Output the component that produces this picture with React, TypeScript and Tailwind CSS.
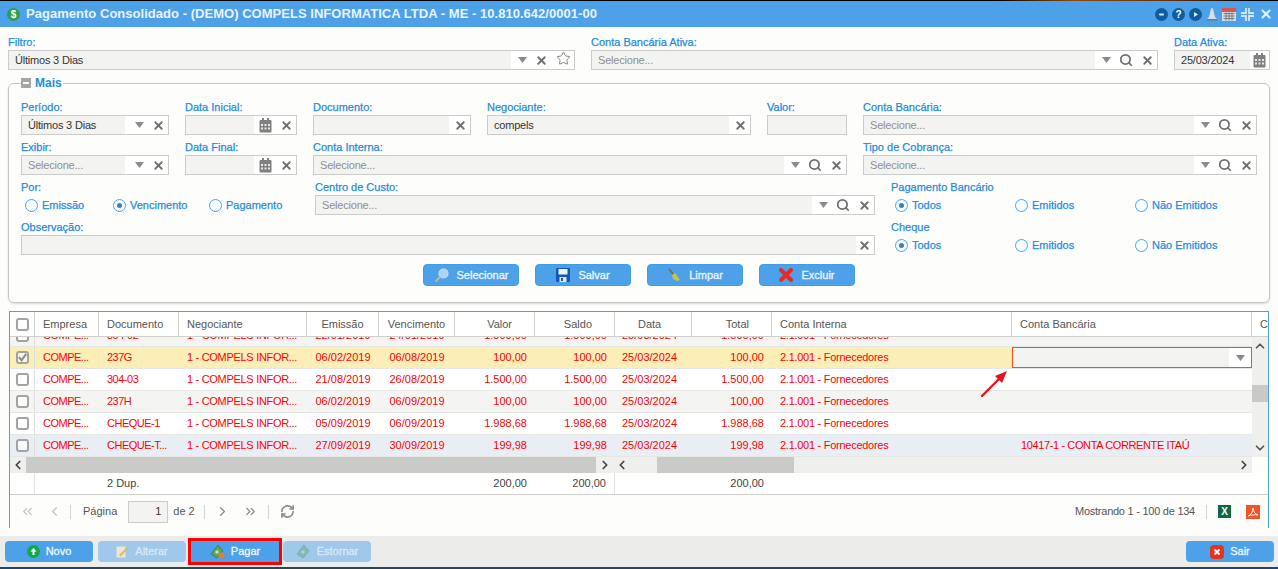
import { Search, Star, X, ChevronLeft, ChevronRight, ChevronUp, ChevronDown, ChevronsLeft, ChevronsRight, RefreshCw } from "lucide-react";
import type { ReactNode } from "react";

const Caret = () => (
  <svg width="9" height="6" viewBox="0 0 9 6" className="shrink-0">
    <path d="M0 0h9L4.500 6z" fill="#8a8a8a" />
  </svg>
);

const Clear = () => <X size={13} strokeWidth={3.4} className="shrink-0 text-[#6f6f6f]" />;
const Lens = () => <Search size={14} strokeWidth={3} className="shrink-0 text-[#6f6f6f]" />;

const Calendar = () => (
  <svg width="13" height="15" viewBox="0 0 13 15" className="shrink-0">
    <rect x="0.5" y="2" width="12" height="12.500" rx="1" fill="#808080" />
    <rect x="3" y="0" width="2" height="4" fill="#808080" />
    <rect x="8" y="0" width="2" height="4" fill="#808080" />
    <path d="M2 6h2v2H2zM5.500 6h2v2h-2zM9 6h2v2H9zM2 9.500h2v2H2zM5.500 9.500h2v2h-2zM9 9.500h2v2H9z" fill="#e8e8e8" />
  </svg>
);

type InputProps = {
  value?: string;
  placeholder?: string;
  icons?: ReactNode;
  iconsWidth?: string;
};

const Input = ({ value, placeholder, icons, iconsWidth }: InputProps) => (
  <div className="flex h-5 w-full border border-[#cbcbc7] bg-white">
    <div className="flex min-w-0 flex-1 items-center overflow-hidden bg-[#f3f4f2] px-[6px] text-[11px] tracking-[-0.2px] whitespace-nowrap text-[#333]">
      {value}
      {placeholder && <span className="text-[#8f8f8f]">{placeholder}</span>}
    </div>
    {icons && (
      <div className={`flex shrink-0 items-center justify-end gap-2 pr-[3px] ${iconsWidth}`}>{icons}</div>
    )}
  </div>
);

const Field = ({ label, className, children }: { label: string; className: string; children: ReactNode }) => (
  <div className={`flex h-10 shrink-0 flex-col ${className}`}>
    <label className="flex h-5 items-center pt-[5px] text-[11px] text-[#1f8be0] [-webkit-text-stroke:0.25px]">{label}</label>
    {children}
  </div>
);

const Radio = ({ label, checked, className }: { label: string; checked?: boolean; className?: string }) => (
  <div className={`flex items-center gap-[4px] text-[11px] text-[#1f8be0] [-webkit-text-stroke:0.25px] ${className ?? ""}`}>
    <span className="flex h-[13px] w-[13px] shrink-0 items-center justify-center rounded-full border border-[#4da1e9] bg-[#fafcfe]">
      {checked && <span className="h-[5px] w-[5px] rounded-full bg-[#3f7fb8]" />}
    </span>
    {label}
  </div>
);

const SelectIcons = (
  <>
    <Caret />
    <Lens />
    <Clear />
  </>
);

const CaretClear = (
  <>
    <Caret />
    <Clear />
  </>
);

const CalClear = (
  <>
    <Calendar />
    <Clear />
  </>
);

const ActionButton = ({ icon, label }: { icon: ReactNode; label: string }) => (
  <button className="flex h-[22px] w-24 items-center justify-center gap-2 rounded-sm border border-[#459ae2] bg-[#4da1e9] text-[11px] text-[#eef6fd] [-webkit-text-stroke:0.3px]">
    {icon}
    {label}
  </button>
);

const FooterButton = ({
  icon,
  label,
  disabled,
  className,
}: {
  icon: ReactNode;
  label: string;
  disabled?: boolean;
  className?: string;
}) => (
  <button
    className={`flex h-[21px] w-[88px] items-center justify-center gap-[6px] text-[11px] [-webkit-text-stroke:0.3px] ${
      disabled ? "bg-[#9fc8ea] text-[#d9e9f6]" : "bg-[#4da1e9] text-[#eef6fd]"
    } ${className ?? "rounded-sm"}`}
  >
    {icon}
    {label}
  </button>
);

const Money = ({ faded }: { faded?: boolean }) => (
  <svg width="15" height="15" viewBox="0 0 15 15" className={faded ? "opacity-40" : ""}>
    <path d="M1 10 8 1l5 6-6 7z" fill="#5aa55a" stroke="#2f7a3a" strokeWidth="0.700" />
    <circle cx="7" cy="8" r="1.800" fill="#bfe3b5" />
    {!faded && <circle cx="11.500" cy="11.500" r="3" fill="#ee7a2a" />}
  </svg>
);

const columns =
  "grid grid-cols-[25px_64px_80px_128px_72px_76px_80px_80px_77px_80px_240px_240px_120px]";

type Row = {
  doc: string;
  emissao: string;
  venc: string;
  valor: string;
  conta?: string;
  bg: string;
  checked?: boolean;
  editing?: boolean;
};

const rows: Row[] = [
  { doc: "304-02", emissao: "22/01/2019", venc: "24/01/2019", valor: "1.500,00", bg: "bg-[#f4f5f3]" },
  { doc: "237G", emissao: "06/02/2019", venc: "06/08/2019", valor: "100,00", bg: "bg-[#fbeeb7]", checked: true, editing: true },
  { doc: "304-03", emissao: "21/08/2019", venc: "26/08/2019", valor: "1.500,00", bg: "bg-white" },
  { doc: "237H", emissao: "06/02/2019", venc: "06/09/2019", valor: "100,00", bg: "bg-[#f4f5f3]" },
  { doc: "CHEQUE-1", emissao: "05/09/2019", venc: "06/09/2019", valor: "1.988,68", bg: "bg-white" },
  {
    doc: "CHEQUE-T...",
    emissao: "27/09/2019",
    venc: "30/09/2019",
    valor: "199,98",
    conta: "10417-1 - CONTA CORRENTE ITAÚ",
    bg: "bg-[#e9eef4]",
  },
];

const Check = ({ checked }: { checked?: boolean }) => (
  <span className="flex h-[13px] w-[13px] items-center justify-center rounded-[3px] border-2 border-[#a3a3a3] bg-white/60">
    {checked && (
      <svg width="11" height="11" viewBox="0 0 12 12" className="shrink-0">
        <path d="M2 5.500 5 9l5-7" fill="none" stroke="#8a8a8a" strokeWidth="2.200" />
      </svg>
    )}
  </span>
);

const headerCell = "flex items-center border-r border-[#d0d0cc] text-[11px] text-[#555] whitespace-nowrap";

const TableHeader = () => (
  <div className={`${columns} h-[25px] shrink-0 border-b border-[#cfcfcb] bg-white`}>
    <div className={`${headerCell} justify-center`}>
      <Check />
    </div>
    <div className={`${headerCell} pl-2`}>Empresa</div>
    <div className={`${headerCell} pl-2`}>Documento</div>
    <div className={`${headerCell} pl-2`}>Negociante</div>
    <div className={`${headerCell} justify-center`}>Emissão</div>
    <div className={`${headerCell} justify-center`}>Vencimento</div>
    <div className={`${headerCell} justify-end pr-[22px]`}>Valor</div>
    <div className={`${headerCell} justify-end pr-[22px]`}>Saldo</div>
    <div className={`${headerCell} pl-[23px]`}>Data</div>
    <div className={`${headerCell} justify-end pr-[22px]`}>Total</div>
    <div className={`${headerCell} pl-2`}>Conta Interna</div>
    <div className={`${headerCell} pl-2`}>Conta Bancária</div>
    <div className={`${headerCell} pl-2`}>Centro</div>
  </div>
);

const TableRow = ({ row }: { row: Row }) => (
  <div className={`${columns} h-[22px] shrink-0 border-b border-[#e6e6e2] text-[11px] text-[#f00] ${row.bg}`}>
    <div className="flex items-center justify-center border-r border-[#dededa]">
      <Check checked={row.checked} />
    </div>
    <div className="flex items-center pl-2 tracking-[-0.5px]">COMPE...</div>
    <div className="flex items-center pl-2 tracking-[-0.5px] whitespace-nowrap">{row.doc}</div>
    <div className="flex items-center pl-2 tracking-[-0.3px] whitespace-nowrap">1 - COMPELS INFOR...</div>
    <div className="flex items-center justify-center">{row.emissao}</div>
    <div className="flex items-center justify-center">{row.venc}</div>
    <div className="flex items-center justify-end pr-2">{row.valor}</div>
    <div className="flex items-center justify-end pr-2">{row.valor}</div>
    <div className="flex items-center pl-[7px]">25/03/2024</div>
    <div className="flex items-center justify-end pr-2">{row.valor}</div>
    <div className="flex items-center pl-2 tracking-[-0.27px] whitespace-nowrap">2.1.001 - Fornecedores</div>
    <div className="flex items-center tracking-[-0.38px] whitespace-nowrap">
      {row.editing ? (
        <div className="flex h-[21px] w-full items-center border border-[#ff4d1a] bg-white">
          <div className="h-full flex-1 bg-[#f3f4f2]" />
          <div className="flex w-[22px] justify-center">
            <Caret />
          </div>
        </div>
      ) : (
        <span className="pl-[9px]">{row.conta}</span>
      )}
    </div>
  </div>
);

const PagerSep = () => <span className="block h-[14px] w-px bg-[#d5d5d1]" />;

export default function App() {
  return (
    <div className="flex h-[569px] w-[1278px] flex-col overflow-hidden bg-[#fdfefc] font-['Liberation_Sans',Arial,sans-serif]">
      <div className="h-px shrink-0 bg-[linear-gradient(90deg,#000_78%,#8a4a14_84%,#5a3010_92%,#000_98%)]" />

      {/* barra de titulo */}
      <div className="flex h-[26px] shrink-0 items-center bg-[#4da1e9] pr-[5px] pl-[7px]">
        <span className="flex h-[13px] w-[13px] items-center justify-center rounded-full bg-[#2e9e4a] text-[10px] font-bold text-white">
          $
        </span>
        <h1 className="ml-[6px] text-[13px] font-bold tracking-[0.03px] text-[#e9f3fc]">
          Pagamento Consolidado - (DEMO) COMPELS INFORMATICA LTDA - ME - 10.810.642/0001-00
        </h1>
        <div className="ml-auto flex items-center gap-1">
          <svg width="13" height="13" viewBox="0 0 13 13">
            <circle cx="6.500" cy="6.500" r="6.500" fill="#0f5d9c" />
            <rect x="4" y="5.500" width="5" height="2" rx="1" fill="#dceaf6" />
          </svg>
          <span className="flex h-[13px] w-[13px] items-center justify-center rounded-full bg-[#0f5d9c] text-[10px] font-bold text-white">
            ?
          </span>
          <svg width="13" height="13" viewBox="0 0 13 13">
            <circle cx="6.500" cy="6.500" r="6.500" fill="#0f5d9c" />
            <path d="M5 4l4 2.500L5 9z" fill="#dceaf6" />
          </svg>
          <svg width="12" height="13" viewBox="0 0 12 13">
            <path d="M6 0c1 0 1.300 1 1.300 2L9 9l2 2H1l2-2 1.700-7C4.700 1 5 0 6 0z" fill="#d7dfe6" />
            <rect x="1" y="11" width="10" height="1.500" fill="#66788a" />
          </svg>
          <svg width="14" height="14" viewBox="0 0 14 14">
            <rect x="0" y="2" width="14" height="12" fill="#d9dde2" />
            <rect x="0" y="1" width="14" height="4" fill="#d8574a" />
            <path d="M1.500 6.500h11M1.500 9h11M1.500 11.500h11M4 5.500v8M7 5.500v8M10 5.500v8" stroke="#6b7480" strokeWidth="0.900" />
          </svg>
          <svg width="13" height="13" viewBox="0 0 13 13" className="ml-[1px]">
            <path d="M5 0v5H0M8 0v5h5M5 13V8H0M8 13V8h5" fill="none" stroke="#d6e8f8" strokeWidth="1.800" />
          </svg>
          <X size={14} strokeWidth={3.6} className="ml-[1px] text-[#e4f0fa]" />
        </div>
      </div>

      {/* filtros do topo */}
      <div className="flex shrink-0 gap-4 pt-[3px] pr-2 pl-2">
        <Field label="Filtro:" className="w-[567px]">
          <Input
            value="Últimos 3 Dias"
            iconsWidth="w-[63px]"
            icons={
              <>
                <Caret />
                <Clear />
                <Star size={15} strokeWidth={1.500} className="shrink-0 -translate-y-[2px] text-[#777]" />
              </>
            }
          />
        </Field>
        <Field label="Conta Bancária Ativa:" className="w-[567px]">
          <Input placeholder="Selecione..." iconsWidth="w-[62px]" icons={SelectIcons} />
        </Field>
        <Field label="Data Ativa:" className="w-24">
          <Input value="25/03/2024" iconsWidth="w-[19px]" icons={<Calendar />} />
        </Field>
      </div>

      {/* painel Mais */}
      <fieldset className="mx-2 mt-[5px] h-[228px] shrink-0 rounded-md border border-[#c6c6c2] px-3 shadow-[0_1px_2px_rgba(0,0,0,0.15)]">
        <legend className="flex h-4 items-center gap-[4px] pr-px text-[12px] font-bold text-[#1f8be0]">
          <span className="flex h-[10px] w-[10px] items-center justify-center bg-[#a5a5a5]">
            <span className="h-[2px] w-[6px] bg-white" />
          </span>
          Mais
        </legend>
        <div className="flex flex-col pt-1">
          <div className="flex gap-4">
            <Field label="Período:" className="w-[148px]">
              <Input value="Últimos 3 Dias" iconsWidth="w-[43px]" icons={CaretClear} />
            </Field>
            <Field label="Data Inicial:" className="w-[112px]">
              <Input iconsWidth="w-[42px]" icons={CalClear} />
            </Field>
            <Field label="Documento:" className="w-[158px]">
              <Input iconsWidth="w-[21px]" icons={<Clear />} />
            </Field>
            <Field label="Negociante:" className="w-[264px]">
              <Input value="compels" iconsWidth="w-[21px]" icons={<Clear />} />
            </Field>
            <Field label="Valor:" className="w-20">
              <Input />
            </Field>
            <Field label="Conta Bancária:" className="w-[394px]">
              <Input placeholder="Selecione..." iconsWidth="w-[62px]" icons={SelectIcons} />
            </Field>
          </div>
          <div className="flex gap-4">
            <Field label="Exibir:" className="w-[148px]">
              <Input placeholder="Selecione..." iconsWidth="w-[43px]" icons={CaretClear} />
            </Field>
            <Field label="Data Final:" className="w-[112px]">
              <Input iconsWidth="w-[42px]" icons={CalClear} />
            </Field>
            <Field label="Conta Interna:" className="w-[534px]">
              <Input placeholder="Selecione..." iconsWidth="w-[62px]" icons={SelectIcons} />
            </Field>
            <Field label="Tipo de Cobrança:" className="w-[394px]">
              <Input placeholder="Selecione..." iconsWidth="w-[62px]" icons={SelectIcons} />
            </Field>
          </div>
          <div className="flex gap-4">
            <Field label="Por:" className="w-[278px]">
              <div className="flex h-5 items-center pl-1">
                <Radio label="Emissão" className="w-[88px]" />
                <Radio label="Vencimento" checked className="w-24" />
                <Radio label="Pagamento" />
              </div>
            </Field>
            <Field label="Centro de Custo:" className="w-[560px]">
              <Input placeholder="Selecione..." iconsWidth="w-[62px]" icons={SelectIcons} />
            </Field>
            <Field label="Pagamento Bancário" className="w-[366px]">
              <div className="flex h-5 items-center pl-1">
                <Radio label="Todos" checked className="w-[120px]" />
                <Radio label="Emitidos" className="w-[120px]" />
                <Radio label="Não Emitidos" />
              </div>
            </Field>
          </div>
          <div className="flex gap-4">
            <Field label="Observação:" className="w-[854px]">
              <Input iconsWidth="w-[18px]" icons={<Clear />} />
            </Field>
            <Field label="Cheque" className="w-[366px]">
              <div className="flex h-5 items-center pl-1">
                <Radio label="Todos" checked className="w-[120px]" />
                <Radio label="Emitidos" className="w-[120px]" />
                <Radio label="Não Emitidos" />
              </div>
            </Field>
          </div>
          <div className="mt-[9px] flex justify-center gap-4">
            <ActionButton
              label="Selecionar"
              icon={
                <svg width="15" height="15" viewBox="0 0 15 15">
                  <circle cx="9.500" cy="5.500" r="4.500" fill="#a9d3f2" stroke="#d5dde3" strokeWidth="1.200" />
                  <path d="M6 9l-4.500 4.500" stroke="#c9b48a" strokeWidth="2.200" />
                </svg>
              }
            />
            <ActionButton
              label="Salvar"
              icon={
                <svg width="14" height="14" viewBox="0 0 14 14">
                  <rect width="14" height="14" rx="1" fill="#1556b8" />
                  <rect x="2.500" y="1" width="9" height="5.500" fill="#eef3f8" />
                  <rect x="3.500" y="9" width="7" height="5" fill="#dfe8f1" />
                  <rect x="5" y="10" width="2" height="3" fill="#1556b8" />
                </svg>
              }
            />
            <ActionButton
              label="Limpar"
              icon={
                <svg width="14" height="14" viewBox="0 0 14 14">
                  <path d="M2 1l5 6" stroke="#8a6a2a" strokeWidth="1.800" />
                  <path d="M5 7l3-2 5 7-3 1-2-1-2-1z" fill="#c9c24a" />
                </svg>
              }
            />
            <ActionButton
              label="Excluir"
              icon={
                <svg width="14" height="14" viewBox="0 0 14 14">
                  <path d="M2 2l10 10M12 2 2 12" stroke="#ea2a22" strokeWidth="4" strokeLinecap="round" />
                </svg>
              }
            />
          </div>
        </div>
      </fieldset>

      {/* grade */}
      <div className="relative mx-[9px] mt-2 flex h-[217px] shrink-0 flex-col overflow-hidden border-x border-t border-[#4da1e9]">
        <TableHeader />
        <div className="flex h-[120px] shrink-0">
          <div className="flex h-full w-[1242px] flex-col justify-end overflow-hidden">
            {rows.map((row) => (
              <TableRow key={row.doc} row={row} />
            ))}
          </div>
          <div className="flex flex-1 flex-col items-center bg-[#eff0ee] py-[2px]">
            <ChevronUp size={14} strokeWidth={3} className="text-[#555]" />
            <div className="mt-8 h-[17px] w-full bg-[#c9c9c7]" />
            <ChevronDown size={14} strokeWidth={3} className="mt-auto text-[#555]" />
          </div>
        </div>

        {/* scroll horizontal */}
        <div className="flex h-4 w-[1242px] shrink-0">
          <div className="flex w-[604px] items-center bg-[#eff0ee]">
            <ChevronLeft size={14} strokeWidth={3} className="w-4 text-[#444]" />
            <div className="h-full flex-1 bg-[#cacac8]" />
            <ChevronRight size={14} strokeWidth={3} className="w-[18px] text-[#444]" />
          </div>
          <div className="flex flex-1 items-center bg-[#eff0ee]">
            <ChevronLeft size={14} strokeWidth={3} className="w-4 text-[#444]" />
            <div className="ml-[27px] h-full w-[137px] bg-[#cacac8]" />
            <ChevronRight size={14} strokeWidth={3} className="ml-auto w-[16px] text-[#444]" />
          </div>
        </div>

        {/* totais */}
        <div className={`${columns} h-[22px] shrink-0 border-b border-[#cfcfcb] bg-white text-[11px] text-[#444]`}>
          <div className="border-r border-[#e0e0dc]" />
          <div />
          <div className="flex items-center pl-2">2 Dup.</div>
          <div />
          <div />
          <div />
          <div className="flex items-center justify-end pr-2">200,00</div>
          <div className="flex items-center justify-end border-r border-[#e0e0dc] pr-2">200,00</div>
          <div />
          <div className="flex items-center justify-end pr-2">200,00</div>
        </div>

        {/* paginacao */}
        <div className="flex flex-1 items-center pr-2 pl-[11px] text-[11px] text-[#555]">
          <ChevronsLeft size={15} className="ml-[-1px] text-[#c4c4c4]" />
          <ChevronLeft size={15} className="ml-[12px] text-[#c4c4c4]" />
          <div className="mr-[9px] ml-2">
            <PagerSep />
          </div>
          <span className="ml-[3px]">Página</span>
          <div className="ml-[11px] flex h-[22px] w-10 items-center justify-end border border-[#cbcbc7] bg-[#f3f4f2] pr-[6px] text-[#333]">1</div>
          <span className="ml-[5px]">de 2</span>
          <div className="mx-[9px]">
            <PagerSep />
          </div>
          <ChevronRight size={15} className="ml-px text-[#8a8a8a]" />
          <ChevronsRight size={15} className="ml-[13px] text-[#8a8a8a]" />
          <div className="ml-[10px]">
            <PagerSep />
          </div>
          <RefreshCw size={15} strokeWidth={2.600} className="ml-[11px] text-[#8a8a8a]" />
          <span className="ml-auto tracking-[-0.25px]">Mostrando 1 - 100 de 134</span>
          <div className="ml-[11px]">
            <PagerSep />
          </div>
          <span className="ml-[11px] flex h-[13px] w-[13px] items-center justify-center bg-[#0f6b3f] text-[10px] font-bold text-white">X</span>
          <svg width="14" height="14" viewBox="0 0 14 14" className="ml-[15px]">
            <rect width="14" height="14" fill="#f0552a" />
            <path d="M2 11c3-1 5-4 5-8 0 3 2 6 5 7-3-.5-7 0-10 1z" fill="none" stroke="#fff" strokeWidth="0.900" />
          </svg>
        </div>

        {/* seta vermelha */}
        <svg width="30" height="28" viewBox="0 0 30 28" className="absolute top-[58px] left-[971px]">
          <path d="M1 26 19 8" stroke="#e8141c" strokeWidth="2.400" strokeLinecap="round" />
          <path d="M26 1 14 6l7 7z" fill="#e8141c" />
        </svg>
      </div>

      {/* rodape */}
      <div className="mt-2 flex h-[31px] shrink-0 items-center bg-[#ecedeb] pr-1 pl-[5px]">
        <div className="flex items-center gap-[5px]">
          <FooterButton
            label="Novo"
            icon={
              <svg width="13" height="13" viewBox="0 0 13 13">
                <circle cx="6.500" cy="6.500" r="6.500" fill="#14a84a" />
                <path d="M6.500 3 9.500 6.500H7.500V10h-2V6.500h-2z" fill="#fff" />
              </svg>
            }
          />
          <FooterButton
            disabled
            label="Alterar"
            icon={
              <svg width="13" height="13" viewBox="0 0 13 13">
                <rect x="0.500" y="1.500" width="9" height="11" fill="#ece7d2" />
                <path d="M3 10 11 2l1.500 1.500L4.500 11.500z" fill="#d9b973" />
              </svg>
            }
          />
          <FooterButton label="Pagar" icon={<Money />} className="-mr-px outline-[3px] outline-[#f00]" />
          <FooterButton disabled label="Estornar" icon={<Money faded />} />
        </div>
        <FooterButton
          className="ml-auto rounded-sm"
          label="Sair"
          icon={
            <svg width="14" height="14" viewBox="0 0 14 14">
              <rect width="14" height="14" rx="4" fill="#e8321e" />
              <path d="M4.500 4.500l5 5M9.500 4.500l-5 5" stroke="#fff" strokeWidth="2" />
            </svg>
          }
        />
      </div>
      <div className="flex-1 bg-[#26455f]" />
    </div>
  );
}
